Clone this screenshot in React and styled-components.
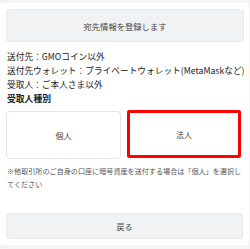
import React from "react";
import styled, { createGlobalStyle } from "styled-components";

const Global = createGlobalStyle`
  html, body { margin: 0; padding: 0; background: #f4f4f5; }
  body { font-family: "Noto Sans CJK JP", "Noto Sans", sans-serif; }
  * { box-sizing: border-box; }
`;

const Card = styled.div`
  margin-top: 3px;
  width: 249px;
  height: 242px;
  background: #ffffff;
  border-radius: 4px;
  padding: 6px 6px 6px 6px;
  display: flex;
  flex-direction: column;
`;

const GrayButton = styled.button`
  width: ${(p) => p.$w}px;
  height: ${(p) => p.$h}px;
  background: #f1f2f4;
  border: 1px solid #e8e9eb;
  border-radius: 3px;
  font-family: inherit;
  font-size: ${(p) => p.$fs}px;
  color: #444;
  display: flex;
  align-items: center;
  justify-content: center;
  padding: 0;
  flex: none;
`;

const Info = styled.div`
  margin-top: 8px;
  padding-left: 1px;
  display: flex;
  flex-direction: column;
`;

const Line = styled.div`
  font-size: ${(p) => (p.$bold ? 8.8 : 8.7)}px;
  font-weight: ${(p) => (p.$bold ? 700 : 400)};
  line-height: 14px;
  color: #222;
  white-space: nowrap;
`;

const Choices = styled.div`
  margin-top: 5px;
  display: grid;
  grid-template-columns: 115px 114px;
  gap: 6px;
`;

const Choice = styled.div`
  height: 48px;
  border: ${(p) => (p.$selected ? "3px solid #ff0000" : "1px solid #e4e4e6")};
  border-radius: ${(p) => (p.$selected ? 2 : 4)}px;
  background: #fff;
  display: flex;
  align-items: center;
  justify-content: center;
  font-size: 8px;
  color: #444;
  margin-top: ${(p) => (p.$selected ? -1 : 0)}px;
`;

const Note = styled.div`
  margin-top: 6px;
  padding-left: 1px;
  font-size: 7.1px;
  line-height: 13px;
  color: #555;
  width: 237px;
`;

const Spacer = styled.div`
  flex: 1;
`;

export default function App() {
  return (
    <>
      <Global />
      <Card>
        <GrayButton $w={238} $h={33} $fs={8.3}>宛先情報を登録します</GrayButton>
        <Info>
          <Line>送付先：GMOコイン以外</Line>
          <Line>送付先ウォレット：プライベートウォレット(MetaMaskなど)</Line>
          <Line>受取人：ご本人さま以外</Line>
          <Line $bold>受取人種別</Line>
        </Info>
        <Choices>
          <Choice>個人</Choice>
          <Choice $selected>法人</Choice>
        </Choices>
        <Note>※他取引所のご自身の口座に暗号資産を送付する場合は「個人」を選択してください</Note>
        <Spacer />
        <GrayButton $w={237} $h={26} $fs={8}>戻る</GrayButton>
      </Card>
    </>
  );
}
